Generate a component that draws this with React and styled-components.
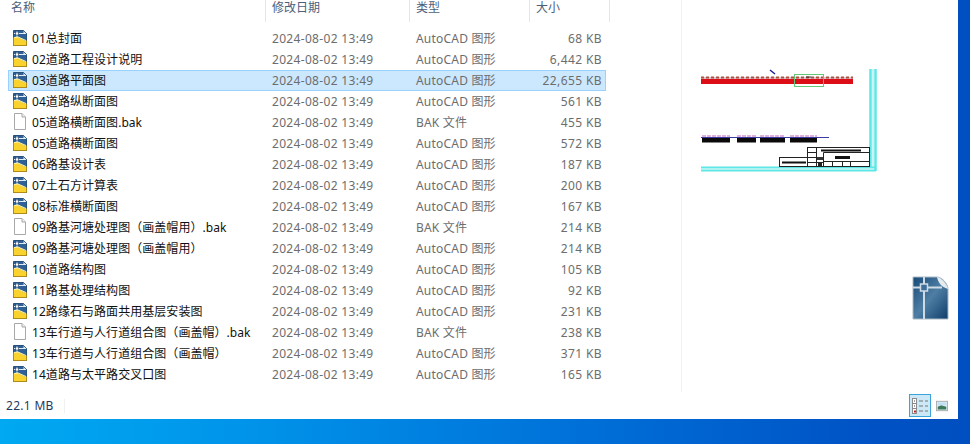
import React from 'react'
import styled, { createGlobalStyle } from 'styled-components'

const GlobalStyle = createGlobalStyle`
    html, body {
        margin: 0;
        padding: 0;
        width: 970px;
        height: 444px;
        overflow: hidden;
    }
`

const files = [
    { name: '01总封面', kind: 'dwg', size: '68 KB' },
    { name: '02道路工程设计说明', kind: 'dwg', size: '6,442 KB' },
    { name: '03道路平面图', kind: 'dwg', size: '22,655 KB', selected: true },
    { name: '04道路纵断面图', kind: 'dwg', size: '561 KB' },
    { name: '05道路横断面图.bak', kind: 'bak', size: '455 KB' },
    { name: '05道路横断面图', kind: 'dwg', size: '572 KB' },
    { name: '06路基设计表', kind: 'dwg', size: '187 KB' },
    { name: '07土石方计算表', kind: 'dwg', size: '200 KB' },
    { name: '08标准横断面图', kind: 'dwg', size: '167 KB' },
    { name: '09路基河塘处理图（画盖帽用）.bak', kind: 'bak', size: '214 KB' },
    { name: '09路基河塘处理图（画盖帽用）', kind: 'dwg', size: '214 KB' },
    { name: '10道路结构图', kind: 'dwg', size: '105 KB' },
    { name: '11路基处理结构图', kind: 'dwg', size: '92 KB' },
    { name: '12路缘石与路面共用基层安装图', kind: 'dwg', size: '231 KB' },
    { name: '13车行道与人行道组合图（画盖帽）.bak', kind: 'bak', size: '238 KB' },
    { name: '13车行道与人行道组合图（画盖帽）', kind: 'dwg', size: '371 KB' },
    { name: '14道路与太平路交叉口图', kind: 'dwg', size: '165 KB' },
]

const Desktop = styled.div`
    width: 970px;
    height: 444px;
    background: linear-gradient(90deg, #00a9f1 0%, #0094ea 25%, #0070d8 60%, #0052c4 90%, #004fc0 100%);
    font-family: "Noto Sans", "Noto Sans CJK SC", sans-serif;
    font-size: 12px;
`

const Explorer = styled.div`
    width: 958px;
    height: 419px;
    background: #fff;
    display: flex;
    flex-direction: column;
`

const Body = styled.div`
    height: 392px;
    display: flex;
`

const ListPane = styled.div`
    width: 681px;
    border-right: 1px solid #f2f2f2;
`

const Header = styled.div`
    display: flex;
    height: 22px;
    width: 610px;
    margin-bottom: 6px;
`

const HeaderCell = styled.div`
    width: ${p => p.$w}px;
    padding-left: ${p => p.$pad || 6}px;
    box-sizing: border-box;
    border-right: 1px solid #e5e5e5;
    color: #4c607a;
    line-height: 16px;
`

const Row = styled.div`
    display: flex;
    align-items: center;
    box-sizing: border-box;
    height: 21px;
    width: 598px;
    margin-left: 8px;
    padding-bottom: 1px;
    border: 1px solid ${p => (p.$selected ? '#99d1ff' : 'transparent')};
    background: ${p => (p.$selected ? '#cce8ff' : 'transparent')};
`

const IconSlot = styled.div`
    width: 19px;
    margin-left: 3px;
    display: flex;
    flex-shrink: 0;
`

const Name = styled.div`
    width: 240px;
    margin-left: 1px;
    color: #111;
    white-space: nowrap;
    letter-spacing: 0.05px;
`

const Date = styled.div`
    width: 144px;
    color: #6d6d6d;
    white-space: nowrap;
    letter-spacing: 0.32px;
`

const Type = styled.div`
    width: 100px;
    color: #6d6d6d;
    white-space: nowrap;
    letter-spacing: 0.2px;
`

const Size = styled.div`
    width: 86px;
    text-align: right;
    color: #6d6d6d;
    white-space: nowrap;
    letter-spacing: 0.4px;
`

const PreviewPane = styled.div`
    flex: 1;
    display: flex;
    flex-direction: column;
    padding-top: 69px;
    padding-left: 19px;
    box-sizing: border-box;
`

const BigIcon = styled.div`
    align-self: flex-end;
    margin-top: 104px;
    margin-right: 9px;
    display: flex;
`

const StatusBar = styled.div`
    flex: 1;
    display: flex;
    align-items: center;
    padding-left: 6px;
    color: #1f3a5f;
`

const StatusSize = styled.div`
    width: 58px;
    height: 14px;
    line-height: 14px;
    border-right: 1px solid #f0f0f0;
    letter-spacing: 0.3px;
`

const ViewButtons = styled.div`
    margin-left: auto;
    margin-right: 9px;
    display: flex;
    align-items: center;
    gap: 4px;
`

const ViewButton = styled.div`
    width: ${p => (p.$active ? 22 : 14)}px;
    height: ${p => (p.$active ? 23 : 12)}px;
    box-sizing: border-box;
    display: flex;
    align-items: center;
    justify-content: center;
    border: 1px solid ${p => (p.$active ? '#3aa3d8' : 'transparent')};
    background: ${p => (p.$active ? '#cce8f7' : 'transparent')};
`

const DwgIcon = () => (
    <svg width="16" height="16" viewBox="0 0 16 16">
        <path d="M1.500 .5H11.500L14.500 3.500V15.500H1.500Z" fill="#2f6096" stroke="#27507c" />
        <path d="M2 7H6L14 11V15H2Z" fill="#f9d22e" />
        <path d="M1.500 7.500V15.500H14.500V10.500" fill="none" stroke="#b08c16" />
        <path d="M2 7L6 6.500L14 10V11L6 7.500L2 8Z" fill="#fff3b4" />
        <path d="M2 3.500H14M5 1V7" stroke="#e4ecf3" fill="none" />
        <rect x="3.500" y="2" width="3" height="3" fill="#fff" stroke="#16395f" strokeWidth=".6" />
        <path d="M11.500 1V3.500H14Z" fill="#e8eef3" />
    </svg>
)

const BakIcon = () => (
    <svg width="16" height="18" viewBox="0 0 16 18">
        <path d="M2.500 .5H10L13.500 4V16.500H2.500Z" fill="#fff" stroke="#a8a8a8" />
        <path d="M10 .5V4H13.500" fill="#f0f0f0" stroke="#a8a8a8" />
    </svg>
)

const DrawingPreview = () => (
    <svg width="176" height="103" viewBox="0 0 176 103">
        {/* road strip */}
        <rect x="0" y="8" width="152" height="2" fill="#e2c4d4" />
        <path d="M0 8.500H152" stroke="#a8553c" strokeWidth="2" strokeDasharray="3 2" />
        <rect x="0" y="10" width="152" height="5" fill="#dc0d16" />
        <path d="M69 1L74 5" stroke="#1a1a9a" strokeWidth="1.500" />
        <rect x="93.500" y="5.500" width="29" height="12" fill="none" stroke="#62c878" />
        <path d="M105 8H110" stroke="#333" />
        {/* section strips */}
        <path d="M1 67H29M36 67H55M59 67H84M89 67H116" stroke="#c060c0" strokeDasharray="4 1" />
        <path d="M0 68.500H128" stroke="#3a3aa0" />
        <rect x="1" y="69" width="28" height="4.500" fill="#0a0a0a" />
        <rect x="36" y="69" width="19" height="4.500" fill="#0a0a0a" />
        <rect x="59" y="69" width="25" height="4.500" fill="#0a0a0a" />
        <rect x="89" y="69" width="27" height="4.500" fill="#0a0a0a" />
        {/* cyan frame */}
        <path d="M169.500 0V98M174.500 0V102" stroke="#5fe6e6" strokeWidth="2.500" fill="none" />
        <rect x="171" y="0" width="2" height="98" fill="#c8f4f4" />
        <path d="M0 98.500H175M0 101.500H175" stroke="#5fe6e6" strokeWidth="2" fill="none" />
        {/* title block */}
        <rect x="106.500" y="78.500" width="62" height="19" fill="#fff" stroke="#222" />
        <rect x="78.500" y="88.500" width="28" height="9" fill="#fff" stroke="#222" />
        <path d="M115.500 78.500V98M122.500 83.500V98M131.500 92.500V98M141.500 92.500V98M149.500 92.500V98M122.500 83.500H168.500M122.500 92.500H168.500M106.500 83.500H115.500M106.500 88.500H115.500M106.500 93.500H122.500" stroke="#222" fill="none" />
        <path d="M81 93.500H105M120 81.500H160" stroke="#111" strokeWidth="2" />
        <rect x="134" y="87" width="15" height="3" fill="#111" />
        <rect x="116" y="88" width="6" height="3" fill="#333" />
        <rect x="117" y="94" width="4" height="3" fill="#222" />
    </svg>
)

const AcadLargeIcon = () => (
    <svg width="37" height="44" viewBox="0 0 37 44">
        <defs>
            <linearGradient id="acadFill" x1="0" y1="0" x2="1" y2="1">
                <stop offset="0" stopColor="#164a78" />
                <stop offset=".5" stopColor="#4f7ea4" />
                <stop offset="1" stopColor="#0f3d6a" />
            </linearGradient>
        </defs>
        <path d="M1 1H25C30 1 36 8 36 13V43H1Z" fill="url(#acadFill)" stroke="#aab8c4" />
        <path d="M12 1V43M1 11.500H30" stroke="#cfdbe4" strokeWidth="2" fill="none" />
        <rect x="8.500" y="8" width="7" height="7" fill="#3f6f98" stroke="#cfdbe4" strokeWidth="1.500" />
        <path d="M25 1C26 6 29 11 36 13C35 8 30 2 25 1Z" fill="#e6ebef" />
    </svg>
)

const DetailsGlyph = () => (
    <svg width="18" height="16" viewBox="0 0 18 16">
        <rect x="1.500" y=".5" width="4" height="15" fill="#fff" stroke="#8a8a8a" />
        <path d="M1.500 5.500H5.500M1.500 10.500H5.500" stroke="#8a8a8a" />
        <rect x="3" y="2.500" width="1" height="1" fill="#444" />
        <rect x="3" y="7.500" width="1" height="1" fill="#444" />
        <rect x="3" y="12.500" width="2" height="2" fill="#c22" />
        <path d="M8 3H12M14 3H17M8 8H12M14 8H17M8 13H12M14 13H17" stroke="#777" />
    </svg>
)

const ThumbGlyph = () => (
    <svg width="14" height="12" viewBox="0 0 14 12">
        <rect x=".5" y=".5" width="13" height="11" fill="#dcecf6" stroke="#a5a5a5" />
        <path d="M2 7L6 5L12 7V10H2Z" fill="#3c7a5a" />
        <rect x="2" y="2" width="10" height="3" fill="#bfe0f4" />
    </svg>
)

const App = () => {
    return (
        <Desktop>
            <GlobalStyle />
            <Explorer>
                <Body>
                    <ListPane>
                        <Header>
                            <HeaderCell $w={266} $pad={11}>名称</HeaderCell>
                            <HeaderCell $w={144}>修改日期</HeaderCell>
                            <HeaderCell $w={120}>类型</HeaderCell>
                            <HeaderCell $w={80}>大小</HeaderCell>
                        </Header>
                        {files.map(file => (
                            <Row key={file.name} $selected={file.selected}>
                                <IconSlot>{file.kind === 'dwg' ? <DwgIcon /> : <BakIcon />}</IconSlot>
                                <Name>{file.name}</Name>
                                <Date>2024-08-02 13:49</Date>
                                <Type>{file.kind === 'dwg' ? 'AutoCAD 图形' : 'BAK 文件'}</Type>
                                <Size>{file.size}</Size>
                            </Row>
                        ))}
                    </ListPane>
                    <PreviewPane>
                        <DrawingPreview />
                        <BigIcon><AcadLargeIcon /></BigIcon>
                    </PreviewPane>
                </Body>
                <StatusBar>
                    <StatusSize>22.1 MB</StatusSize>
                    <ViewButtons>
                        <ViewButton $active><DetailsGlyph /></ViewButton>
                        <ViewButton><ThumbGlyph /></ViewButton>
                    </ViewButtons>
                </StatusBar>
            </Explorer>
        </Desktop>
    )
}

export default App
